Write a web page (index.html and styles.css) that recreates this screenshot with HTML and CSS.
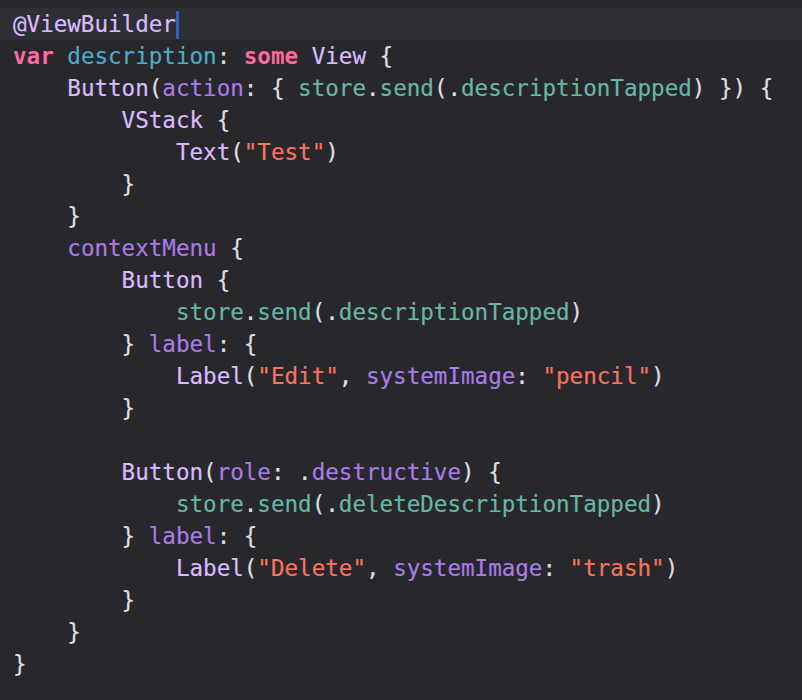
FILE: index.html
```html
<!DOCTYPE html>
<html>
<head>
<meta charset="utf-8">
<link rel="stylesheet" href="styles.css">
</head>
<body>
<div class="editor">
<div class="line current"><span class="ty">@ViewBuilder</span><span class="cursor"></span></div>
<div class="line"><span class="kw">var</span> <span class="decl">description</span>: <span class="kw">some</span> <span class="ty">View</span> {</div>
<div class="line">    <span class="ty">Button</span>(<span class="fn">action</span>: { <span class="pr">store</span>.<span class="pr">send</span>(.<span class="pr">descriptionTapped</span>) }) {</div>
<div class="line">        <span class="ty">VStack</span> {</div>
<div class="line">            <span class="ty">Text</span>(<span class="str">"Test"</span>)</div>
<div class="line">        }</div>
<div class="line">    }</div>
<div class="line">    <span class="fn">contextMenu</span> {</div>
<div class="line">        <span class="ty">Button</span> {</div>
<div class="line">            <span class="pr">store</span>.<span class="pr">send</span>(.<span class="pr">descriptionTapped</span>)</div>
<div class="line">        } <span class="fn">label</span>: {</div>
<div class="line">            <span class="ty">Label</span>(<span class="str">"Edit"</span>, <span class="fn">systemImage</span>: <span class="str">"pencil"</span>)</div>
<div class="line">        }</div>
<div class="line"> </div>
<div class="line">        <span class="ty">Button</span>(<span class="fn">role</span>: .<span class="fn">destructive</span>) {</div>
<div class="line">            <span class="pr">store</span>.<span class="pr">send</span>(.<span class="pr">deleteDescriptionTapped</span>)</div>
<div class="line">        } <span class="fn">label</span>: {</div>
<div class="line">            <span class="ty">Label</span>(<span class="str">"Delete"</span>, <span class="fn">systemImage</span>: <span class="str">"trash"</span>)</div>
<div class="line">        }</div>
<div class="line">    }</div>
<div class="line">}</div>
</div>
</body>
</html>
```
FILE: styles.css
```css
html, body {
  margin: 0;
  padding: 0;
  background: #27272c;
}
.editor {
  padding-top: 8px;
  font-family: "DejaVu Sans Mono", "Liberation Mono", monospace;
  font-size: 22.55px;
  color: #dfdfe0;
  min-height: 692px;
  -webkit-text-stroke: 0.2px currentColor;
}
.line {
  height: 32px;
  line-height: 32px;
  white-space: pre;
  padding-left: 13px;
  position: relative;
}
.current {
  background: #2e2f34;
}
.cursor {
  display: inline-block;
  width: 3px;
  height: 28px;
  background: #2a62cc;
  vertical-align: -7px;
  margin-left: 0;
}
.kw { color: #fc6b9d; font-weight: bold; -webkit-text-stroke: 0; }
.decl { color: #4eaac8; }
.ty { color: #d9bbfd; }
.pr { color: #67b6a3; }
.fn { color: #a97be4; }
.str { color: #f5735f; }
```
